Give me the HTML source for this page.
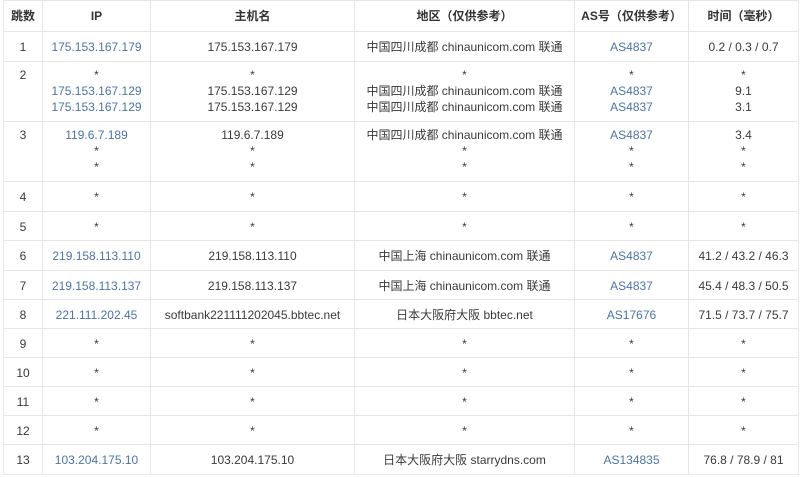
<!DOCTYPE html>
<html><head><meta charset="utf-8"><style>
body{margin:0;background:#fff;width:800px;height:477px;overflow:hidden;font-family:"Liberation Sans","Noto Sans CJK SC",sans-serif;font-size:12px;color:#3a3a3a}
table{position:absolute;left:3px;top:0;border-collapse:collapse;table-layout:fixed;width:795px}
td,th{border:1px solid #e6e6e6;text-align:center;vertical-align:top;padding:0;line-height:16px}
th{font-weight:bold;height:30px;vertical-align:middle;color:#333}
td{padding-top:7px}
tr.m td{padding-top:5px}
a{color:#4c74a8;text-decoration:none}
</style></head><body>
<table>
<colgroup><col style="width:39px"><col style="width:108px"><col style="width:204px"><col style="width:220px"><col style="width:114px"><col style="width:110px"></colgroup>
<tr><th>跳数</th><th>IP</th><th>主机名</th><th>地区（仅供参考）</th><th>AS号（仅供参考）</th><th>时间（毫秒）</th></tr>
<tr style="height:30px"><td>1</td><td><a>175.153.167.179</a></td><td>175.153.167.179</td><td>中国四川成都 chinaunicom.com 联通</td><td><a>AS4837</a></td><td>0.2 / 0.3 / 0.7</td></tr>
<tr class="m" style="height:60px"><td>2</td><td>*<br><a>175.153.167.129</a><br><a>175.153.167.129</a></td><td>*<br>175.153.167.129<br>175.153.167.129</td><td>*<br>中国四川成都 chinaunicom.com 联通<br>中国四川成都 chinaunicom.com 联通</td><td>*<br><a>AS4837</a><br><a>AS4837</a></td><td>*<br>9.1<br>3.1</td></tr>
<tr class="m" style="height:60px"><td>3</td><td><a>119.6.7.189</a><br>*<br>*</td><td>119.6.7.189<br>*<br>*</td><td>中国四川成都 chinaunicom.com 联通<br>*<br>*</td><td><a>AS4837</a><br>*<br>*</td><td>3.4<br>*<br>*</td></tr>
<tr style="height:30px"><td>4</td><td>*</td><td>*</td><td>*</td><td>*</td><td>*</td></tr>
<tr style="height:29px"><td>5</td><td>*</td><td>*</td><td>*</td><td>*</td><td>*</td></tr>
<tr style="height:30px"><td>6</td><td><a>219.158.113.110</a></td><td>219.158.113.110</td><td>中国上海 chinaunicom.com 联通</td><td><a>AS4837</a></td><td>41.2 / 43.2 / 46.3</td></tr>
<tr style="height:29px"><td>7</td><td><a>219.158.113.137</a></td><td>219.158.113.137</td><td>中国上海 chinaunicom.com 联通</td><td><a>AS4837</a></td><td>45.4 / 48.3 / 50.5</td></tr>
<tr style="height:29px"><td>8</td><td><a>221.111.202.45</a></td><td>softbank221111202045.bbtec.net</td><td>日本大阪府大阪 bbtec.net</td><td><a>AS17676</a></td><td>71.5 / 73.7 / 75.7</td></tr>
<tr style="height:29px"><td>9</td><td>*</td><td>*</td><td>*</td><td>*</td><td>*</td></tr>
<tr style="height:29px"><td>10</td><td>*</td><td>*</td><td>*</td><td>*</td><td>*</td></tr>
<tr style="height:29px"><td>11</td><td>*</td><td>*</td><td>*</td><td>*</td><td>*</td></tr>
<tr style="height:29px"><td>12</td><td>*</td><td>*</td><td>*</td><td>*</td><td>*</td></tr>
<tr style="height:30px"><td>13</td><td><a>103.204.175.10</a></td><td>103.204.175.10</td><td>日本大阪府大阪 starrydns.com</td><td><a>AS134835</a></td><td>76.8 / 78.9 / 81</td></tr>
</table>
</body></html>
